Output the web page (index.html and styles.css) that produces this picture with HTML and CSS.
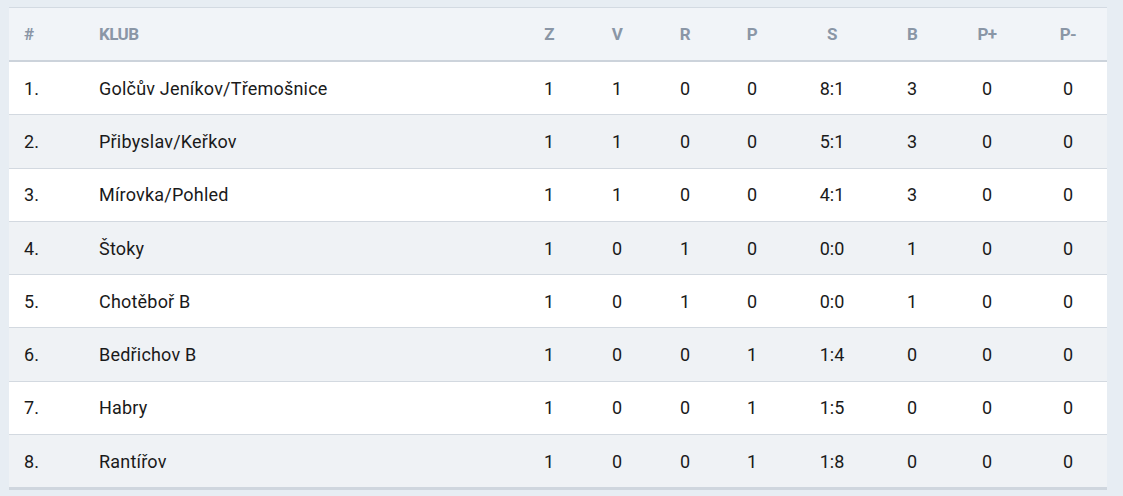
FILE: index.html
```html
<!DOCTYPE html>
<html lang="cs">
<head>
<meta charset="utf-8">
<title>Tabulka</title>
<link rel="stylesheet" href="styles.css">
</head>
<body>
<div class="wrap">
<table class="standings">
<colgroup>
<col class="c-pos"><col class="c-club"><col class="c-n"><col class="c-n"><col class="c-n"><col class="c-p"><col class="c-s"><col class="c-b"><col class="c-pp"><col class="c-pm">
</colgroup>
<thead>
<tr><th class="l">#</th><th class="l">Klub</th><th>Z</th><th>V</th><th>R</th><th>P</th><th>S</th><th>B</th><th>P+</th><th>P-</th></tr>
</thead>
<tbody>
<tr><td class="l">1.</td><td class="l">Golčův Jeníkov/Třemošnice</td><td>1</td><td>1</td><td>0</td><td>0</td><td>8:1</td><td>3</td><td>0</td><td>0</td></tr>
<tr><td class="l">2.</td><td class="l">Přibyslav/Keřkov</td><td>1</td><td>1</td><td>0</td><td>0</td><td>5:1</td><td>3</td><td>0</td><td>0</td></tr>
<tr><td class="l">3.</td><td class="l">Mírovka/Pohled</td><td>1</td><td>1</td><td>0</td><td>0</td><td>4:1</td><td>3</td><td>0</td><td>0</td></tr>
<tr><td class="l">4.</td><td class="l">Štoky</td><td>1</td><td>0</td><td>1</td><td>0</td><td>0:0</td><td>1</td><td>0</td><td>0</td></tr>
<tr><td class="l">5.</td><td class="l">Chotěboř B</td><td>1</td><td>0</td><td>1</td><td>0</td><td>0:0</td><td>1</td><td>0</td><td>0</td></tr>
<tr><td class="l">6.</td><td class="l">Bedřichov B</td><td>1</td><td>0</td><td>0</td><td>1</td><td>1:4</td><td>0</td><td>0</td><td>0</td></tr>
<tr><td class="l">7.</td><td class="l">Habry</td><td>1</td><td>0</td><td>0</td><td>1</td><td>1:5</td><td>0</td><td>0</td><td>0</td></tr>
<tr><td class="l">8.</td><td class="l">Rantířov</td><td>1</td><td>0</td><td>0</td><td>1</td><td>1:8</td><td>0</td><td>0</td><td>0</td></tr>
</tbody>
</table>
</div>
</body>
</html>
```
FILE: styles.css
```css
html, body {
  margin: 0;
  padding: 0;
  background: #e7edf3;
  height: 100%;
}
body {
  font-family: Roboto, "Liberation Sans", sans-serif;
}
.wrap {
  padding: 7px 16px 0 9px;
}
.standings {
  width: 1098px;
  border-collapse: collapse;
  table-layout: fixed;
  border-top: 1px solid #d3dae2;
  border-bottom: 3px solid #cfd6de;
}
.c-pos { width: 75px; }
.c-club { width: 431px; }
.c-n { width: 68px; }
.c-p { width: 66px; }
.c-s { width: 94px; }
.c-b { width: 66px; }
.c-pp { width: 84px; }
.c-pm { width: 78px; }

.standings th {
  height: 52px;
  padding: 0;
  background: #f1f4f8;
  color: #8a96a6;
  font-size: 17px;
  font-weight: 700;
  letter-spacing: -0.6px;
  text-transform: uppercase;
  text-align: center;
  border-bottom: 2px solid #ccd3db;
}
.standings td {
  height: 52.3px;
  padding: 0;
  font-size: 18px;
  color: #1a1a1a;
  text-align: center;
  border-bottom: 1px solid #d3d9e0;
}
.standings tbody tr:last-child td { border-bottom: none; }
.standings tbody tr:nth-child(odd) td { background: #ffffff; }
.standings tbody tr:nth-child(even) td { background: #eff2f5; }
.standings .l { text-align: left; padding-left: 15px; }
.standings td.l { letter-spacing: 0.2px; }
```
